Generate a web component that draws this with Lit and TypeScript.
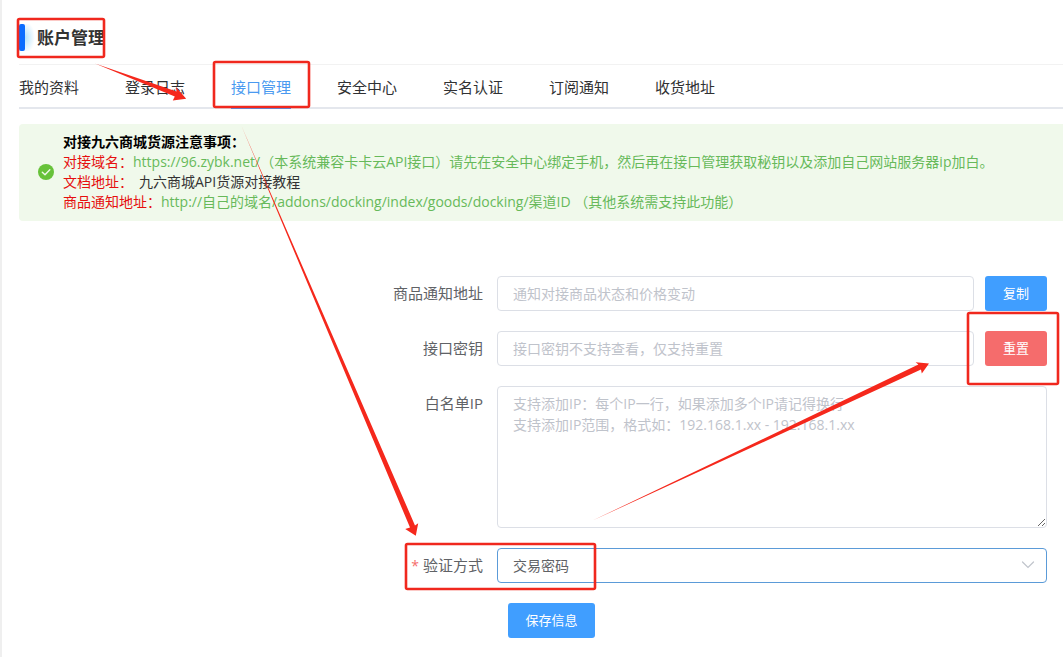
import { LitElement, html, css, svg } from "lit";
import { customElement, state } from "lit/decorators.js";

const TABS = ["我的资料", "登录日志", "接口管理", "安全中心", "实名认证", "订阅通知", "收货地址"];

const MARKS = [
  { x: 18, y: 19, w: 86, h: 38 },
  { x: 214, y: 62, w: 95, h: 45 },
  { x: 968, y: 313, w: 90, h: 71 },
  { x: 406, y: 544, w: 189, h: 45 },
];

const ARROWS = [
  "M95 63.5 L176.5 91.5 L176 87 L186.2 98.8 L172.8 100.4 L174.8 96.5 Z",
  "M241.5 126 L415 525.4 L418.2 523.2 L415.8 535.8 L405.2 529 L410 527.6 Z",
  "M592 520.8 L918.4 364.6 L915.6 362.2 L929 363.4 L921.8 373.4 L921 369.6 Z",
];

@customElement("app-root")
export class AppRoot extends LitElement {
  @state() private active = 2;

  static styles = css`
    :host {
      display: block;
      position: relative;
      box-sizing: border-box;
      min-height: 100vh;
      overflow: hidden;
      border-left: 2px solid #efefef;
      padding-left: 17px;
      background: #fff;
      color: #303133;
      font-family: "Open Sans", "Noto Sans CJK SC", sans-serif;
      font-size: 15px;
    }
    * { box-sizing: border-box; }
    .head {
      display: flex;
      align-items: center;
      height: 65px;
      padding-top: 11px;
      border-bottom: 1px solid #f2f2f2;
    }
    .bar {
      width: 6px;
      height: 27px;
      border-radius: 2px;
      background: #0a6cff;
    }
    .glow {
      width: 12px;
      height: 27px;
      background: radial-gradient(ellipse 10px 16px at left center, #b4e2fb, #fff);
    }
    .title {
      margin: 0;
      font-size: 17px;
      line-height: 24px;
      font-weight: 700;
      color: #333;
    }
    .tabs {
      display: flex;
      gap: 46px;
      height: 44px;
      border-bottom: 2px solid #e4e7ed;
    }
    .tab {
      height: 44px;
      line-height: 45px;
      color: #303133;
      text-decoration: none;
      white-space: nowrap;
    }
    .tab.on {
      color: #4a9af0;
      border-bottom: 2px solid #409eff;
    }
    .alert {
      display: flex;
      align-items: center;
      gap: 9px;
      margin-top: 15px;
      padding: 8px 0 9px 19px;
      border-radius: 4px 0 0 4px;
      background: #f0f9eb;
      color: #67b95a;
      font-size: 14px;
      line-height: 20px;
    }
    .ok { flex: none; display: block; }
    .line { margin: 0; white-space: nowrap; }
    .strong { color: #000; font-weight: 700; }
    .red { color: #e60f0f; }
    .doc { color: #333; text-decoration: none; margin-left: 6px; }
    .form {
      display: flex;
      flex-direction: column;
      gap: 20px;
      padding: 55px 16px 19px 0;
    }
    .row {
      display: grid;
      grid-template-columns: 464px minmax(0, 1fr);
      column-gap: 14px;
    }
    .label {
      text-align: right;
      line-height: 35px;
      color: #606266;
    }
    .req { color: #f56c6c; margin-right: 4px; font-size: 14px; }
    .ctl { display: flex; gap: 11px; position: relative; }
    .field {
      flex: 1;
      min-width: 0;
      height: 35px;
      margin: 0;
      padding: 0 15px;
      border: 1px solid #dcdfe6;
      border-radius: 4px;
      background: #fff;
      color: #606266;
      font: inherit;
      font-size: 14px;
      outline: none;
      appearance: none;
    }
    .field::placeholder { color: #bfc3cb; opacity: 1; }
    .area {
      height: 142px;
      padding: 6px 15px;
      line-height: 21px;
      resize: vertical;
    }
    .pick { border-color: #5b9bd8; }
    .chev {
      position: absolute;
      right: 12px;
      top: 12px;
      pointer-events: none;
    }
    .btn {
      height: 35px;
      padding: 0 0 2px;
      border: 0;
      border-radius: 3px;
      background: #409eff;
      color: #fff;
      font: inherit;
      font-size: 13px;
      white-space: nowrap;
    }
    .side { width: 62px; }
    .danger { background: #f56c6c; }
    .save { margin-left: 11px; width: 87px; }
    .notes {
      position: absolute;
      left: -2px;
      top: 0;
      overflow: visible;
      pointer-events: none;
    }
  `;

  render() {
    return html`
      <header class="head">
        <span class="bar"></span><span class="glow"></span>
        <h1 class="title">账户管理</h1>
      </header>
      <nav class="tabs">
        ${TABS.map(
          (t, i) => html`<a class="tab ${i === this.active ? "on" : ""}" href="#"
            @click=${(e: Event) => { e.preventDefault(); this.active = i; }}>${t}</a>`
        )}
      </nav>
      <section class="alert">
        <svg class="ok" width="16" height="16" viewBox="0 0 16 16">
          <circle cx="8" cy="8" r="8" fill="#67c23a" />
          <path d="M4.3 8.2 L7 10.7 L11.8 5.8" fill="none" stroke="#f0f9eb" stroke-width="1.4" stroke-linecap="round" stroke-linejoin="round" />
        </svg>
        <div>
          <p class="line strong">对接九六商城货源注意事项：</p>
          <p class="line"><span class="red">对接域名：</span>https://96.zybk.net/（本系统兼容卡卡云API接口）请先在安全中心绑定手机，然后再在接口管理获取秘钥以及添加自己网站服务器ip加白。</p>
          <p class="line"><span class="red">文档地址：</span><a class="doc" href="#">九六商城API货源对接教程</a></p>
          <p class="line"><span class="red">商品通知地址：</span>http://自己的域名/addons/docking/index/goods/docking/渠道ID （其他系统需支持此功能）</p>
        </div>
      </section>
      <form class="form" @submit=${(e: Event) => e.preventDefault()}>
        <div class="row">
          <label class="label" for="notify">商品通知地址</label>
          <div class="ctl">
            <input class="field" id="notify" type="text" placeholder="通知对接商品状态和价格变动" />
            <button class="btn side" type="button">复制</button>
          </div>
        </div>
        <div class="row">
          <label class="label" for="secret">接口密钥</label>
          <div class="ctl">
            <input class="field" id="secret" type="text" placeholder="接口密钥不支持查看，仅支持重置" />
            <button class="btn side danger" type="button">重置</button>
          </div>
        </div>
        <div class="row">
          <label class="label" for="ips">白名单IP</label>
          <div class="ctl">
            <textarea class="field area" id="ips" placeholder=${"支持添加IP：每个IP一行，如果添加多个IP请记得换行\n支持添加IP范围，格式如：192.168.1.xx - 192.168.1.xx"}></textarea>
          </div>
        </div>
        <div class="row">
          <label class="label" for="verify"><span class="req">*</span>验证方式</label>
          <div class="ctl">
            <select class="field pick" id="verify"><option>交易密码</option></select>
            <svg class="chev" width="14" height="10" viewBox="0 0 14 10">
              <path d="M1.5 2 L7 7.5 L12.5 2" fill="none" stroke="#c0c4cc" stroke-width="1.2" stroke-linecap="round" />
            </svg>
          </div>
        </div>
        <div class="row">
          <span></span>
          <div class="ctl"><button class="btn save" type="submit">保存信息</button></div>
        </div>
      </form>
      <svg class="notes" width="1" height="1" aria-hidden="true">
        ${MARKS.map((m) => svg`<rect x=${m.x} y=${m.y} width=${m.w} height=${m.h} rx="1.5" fill="none" stroke="#f0281e" stroke-width="2.6" />`)}
        ${ARROWS.map((d) => svg`<path d=${d} fill="#f5281c" />`)}
      </svg>
    `;
  }
}
